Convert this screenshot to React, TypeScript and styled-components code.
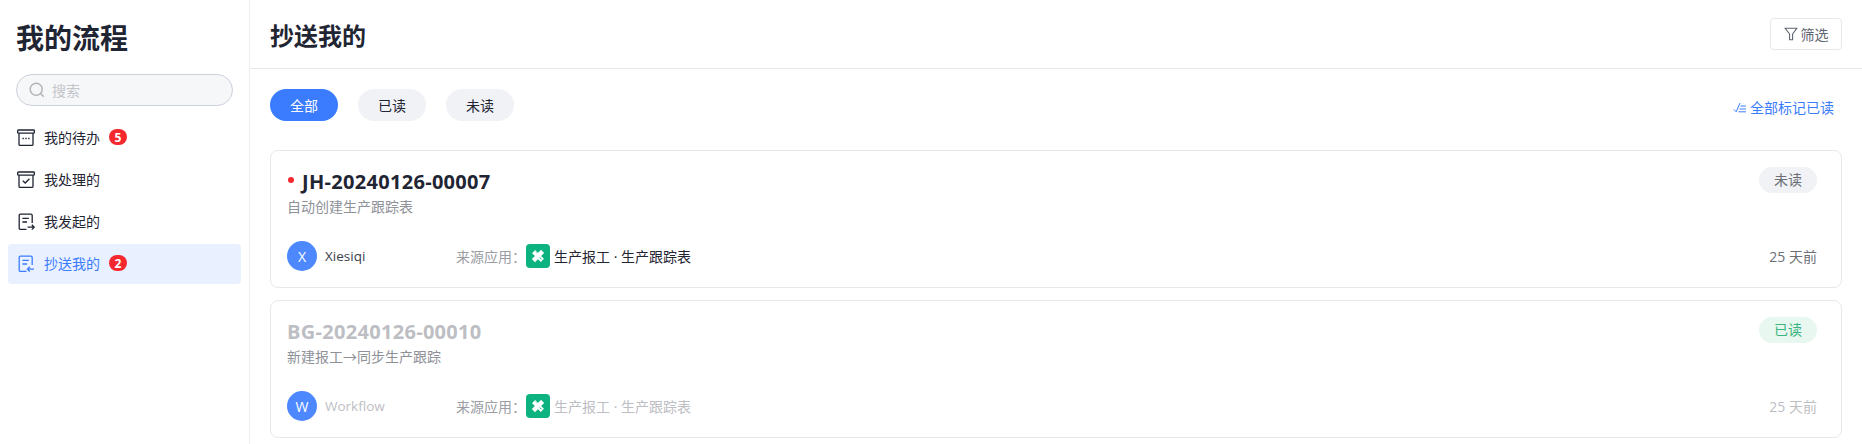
import styled, { createGlobalStyle } from 'styled-components';

const GlobalStyle = createGlobalStyle`
    html, body {
        margin: 0;
        height: 100%;
        background: #fff;
        font-family: 'Open Sans', 'Noto Sans CJK SC', sans-serif;
        overflow: hidden;
    }
    * { box-sizing: border-box; }
`;

const ArchiveIcon = ({ check }: { check?: boolean }) => (
    <svg width="18" height="18" viewBox="0 0 18 18" fill="none" stroke="currentColor" strokeWidth="1.3">
        <rect x="0.7" y="1" width="16.6" height="3.2" rx="0.6" />
        <path d="M2 4.2V15.4A1 1 0 0 0 3 16.4H15A1 1 0 0 0 16 15.4V4.2" />
        {check ? (
            <path d="M5.8 9.8L8.2 12L12.4 7.8" />
        ) : (
            <path d="M5.4 9.6H6.8M8.3 9.6H9.7M11.2 9.6H12.6" strokeWidth="1.5" />
        )}
    </svg>
);

const DocIcon = ({ incoming }: { incoming?: boolean }) => (
    <svg width="18" height="18" viewBox="0 0 18 18" fill="none" stroke="currentColor" strokeWidth="1.3">
        <path d="M9.5 16.4H3.4A1.2 1.2 0 0 1 2.2 15.2V2.4A1.2 1.2 0 0 1 3.4 1.2H14A1.2 1.2 0 0 1 15.2 2.4V10" />
        <path d="M5.4 5.4H11.8M5.4 9H10" />
        {incoming ? (
            <path d="M17 14.2H10.6M12.8 11.8L10.4 14.2L12.8 16.6" />
        ) : (
            <path d="M10.6 14.2H17M14.8 11.8L17.2 14.2L14.8 16.6" />
        )}
    </svg>
);

const AppLogo = () => (
    <svg width="16" height="16" viewBox="0 0 16 16" fill="none">
        <path d="M3.6 3.6L12.4 12.4" stroke="#fff" strokeWidth="4.4" />
        <path d="M12.6 3.4L3.4 12.6" stroke="#fff" strokeWidth="4.4" />
        <path d="M9.6 9.4L11.6 11.4M6 3.6L7 4.6" stroke="#0cb27f" strokeWidth="0.9" />
    </svg>
);

const items = [
    { label: '我的待办', badge: '5', icon: <ArchiveIcon /> },
    { label: '我处理的', icon: <ArchiveIcon check /> },
    { label: '我发起的', icon: <DocIcon /> },
    { label: '抄送我的', badge: '2', icon: <DocIcon incoming />, active: true },
];

const cards = [
    {
        code: 'JH-20240126-00007',
        desc: '自动创建生产跟踪表',
        user: 'Xiesiqi',
        initial: 'X',
        read: false,
    },
    {
        code: 'BG-20240126-00010',
        desc: '新建报工→同步生产跟踪',
        user: 'Workflow',
        initial: 'W',
        read: true,
    },
];

const App = () => (
    <Page>
        <GlobalStyle />
        <Sidebar>
            <SideTitle>我的流程</SideTitle>
            <SearchBox>
                <svg width="16" height="16" viewBox="0 0 16 16" fill="none" stroke="#b4b6bb" strokeWidth="1.5">
                    <circle cx="7.2" cy="7.2" r="6" />
                    <path d="M11.6 11.6L14.8 14.8" />
                </svg>
                <span>搜索</span>
            </SearchBox>
            <NavList>
                {items.map((item) => (
                    <NavItem key={item.label} $active={item.active}>
                        <NavIcon>{item.icon}</NavIcon>
                        <NavLabel>{item.label}</NavLabel>
                        {item.badge && <Badge>{item.badge}</Badge>}
                    </NavItem>
                ))}
            </NavList>
        </Sidebar>

        <Main>
            <Header>
                <Title>抄送我的</Title>
                <FilterButton>
                    <svg width="14" height="14" viewBox="0 0 14 14" fill="none" stroke="#5f6570" strokeWidth="1.1">
                        <path d="M1 1.2H13L8.6 7V12.8H5.6V7Z" strokeLinejoin="round" />
                    </svg>
                    筛选
                </FilterButton>
            </Header>

            <Content>
                <Toolbar>
                    <Tabs>
                        <Tab $active>全部</Tab>
                        <Tab>已读</Tab>
                        <Tab>未读</Tab>
                    </Tabs>
                    <MarkAll>
                        <svg width="14" height="14" viewBox="0 0 14 14" fill="none" stroke="#3b7cff" strokeWidth="1">
                            <path d="M1 9.5L3.2 11.8L7 3M7.5 6H13M6.5 9H13M5.5 11.8H13" />
                        </svg>
                        全部标记已读
                    </MarkAll>
                </Toolbar>

                {cards.map((card) => (
                    <Card key={card.code}>
                        <CardTop>
                            <div>
                                <Code $read={card.read}>
                                    {!card.read && <UnreadDot />}
                                    {card.code}
                                </Code>
                                <Desc>{card.desc}</Desc>
                            </div>
                            <Status $read={card.read}>{card.read ? '已读' : '未读'}</Status>
                        </CardTop>
                        <CardBottom>
                            <UserCell>
                                <Avatar>{card.initial}</Avatar>
                                <UserName $read={card.read}>{card.user}</UserName>
                            </UserCell>
                            <SourceLabel>来源应用：</SourceLabel>
                            <AppBadge>
                                <AppLogo />
                            </AppBadge>
                            <SourceName $read={card.read}>生产报工 · 生产跟踪表</SourceName>
                            <Time $read={card.read}>25 天前</Time>
                        </CardBottom>
                    </Card>
                ))}
            </Content>
        </Main>
    </Page>
);

export default App;

const Page = styled.div`
    display: flex;
    width: 1862px;
    height: 444px;
    overflow: hidden;
    color: #1f2533;
`;

const Sidebar = styled.aside`
    width: 250px;
    flex-shrink: 0;
    padding: 0 8px;
    border-right: 1px solid #eceef2;
`;

const SideTitle = styled.h1`
    margin: 21px 0 0 8px;
    font-size: 28px;
    line-height: 34px;
    font-weight: 700;
    color: #1f2533;
`;

const SearchBox = styled.div`
    display: flex;
    align-items: center;
    gap: 7px;
    width: 217px;
    height: 32px;
    margin: 19px 0 0 8px;
    padding: 0 12px;
    background: #f6f7f9;
    border: 1px solid #cdd1dc;
    border-radius: 16px;
    font-size: 14px;
    color: #c3c5ca;
`;

const NavList = styled.nav`
    display: flex;
    flex-direction: column;
    gap: 2px;
    margin-top: 12px;
`;

const NavItem = styled.div<{ $active?: boolean }>`
    display: flex;
    align-items: center;
    width: 233px;
    height: 40px;
    padding: 0 10px;
    border-radius: 4px;
    font-size: 14px;
    background: ${({ $active }) => ($active ? '#e9f0ff' : 'transparent')};
    color: ${({ $active }) => ($active ? '#3b7cff' : '#1f2533')};
`;

const NavIcon = styled.span`
    display: flex;
    width: 26px;
    flex-shrink: 0;
    margin-left: -1px;
    margin-right: 1px;
`;

const NavLabel = styled.span`
    margin-top: -2px;
`;

const Badge = styled.span`
    display: flex;
    align-items: center;
    justify-content: center;
    width: 18px;
    height: 16px;
    margin: -2px 0 0 9px;
    border-radius: 8px;
    background: #f5282d;
    color: #fff;
    font-size: 12px;
    font-weight: 700;
`;

const Main = styled.main`
    flex: 1;
    min-width: 0;
`;

const Header = styled.header`
    display: flex;
    align-items: center;
    justify-content: space-between;
    height: 69px;
    padding: 0 20px;
    border-bottom: 1px solid #e7e8ec;
`;

const Title = styled.h2`
    margin: 0;
    font-size: 24px;
    font-weight: 700;
    color: #1f2533;
`;

const FilterButton = styled.button`
    display: flex;
    align-items: center;
    justify-content: center;
    gap: 3px;
    width: 72px;
    height: 32px;
    padding: 0;
    background: #fff;
    border: 1px solid #e7e8ec;
    border-radius: 4px;
    font-family: inherit;
    font-size: 14px;
    color: #5f6570;
`;

const Content = styled.div`
    padding: 20px 20px 0;
`;

const Toolbar = styled.div`
    display: flex;
    align-items: center;
    justify-content: space-between;
    height: 32px;
    margin-bottom: 29px;
`;

const Tabs = styled.div`
    display: flex;
    gap: 20px;
`;

const Tab = styled.div<{ $active?: boolean }>`
    display: flex;
    align-items: center;
    justify-content: center;
    width: 68px;
    height: 32px;
    border-radius: 16px;
    font-size: 14px;
    background: ${({ $active }) => ($active ? '#3b7cff' : '#f0f2f6')};
    color: ${({ $active }) => ($active ? '#fff' : '#1f2533')};
`;

const MarkAll = styled.div`
    display: flex;
    align-items: center;
    gap: 3px;
    margin: 3px 8px 0 0;
    font-size: 14px;
    color: #3b7cff;
`;

const Card = styled.article`
    display: flex;
    flex-direction: column;
    justify-content: space-between;
    height: 138px;
    margin-bottom: 12px;
    padding: 18px 24px 16px 16px;
    border: 1px solid #e7e8ec;
    border-radius: 8px;
`;

const CardTop = styled.div`
    display: flex;
    justify-content: space-between;
    align-items: flex-start;
`;

const Code = styled.div<{ $read?: boolean }>`
    display: flex;
    align-items: center;
    font-size: 20px;
    line-height: 26px;
    font-weight: 700;
    letter-spacing: 0.3px;
    color: ${({ $read }) => ($read ? '#bdbec3' : '#1f2533')};
`;

const UnreadDot = styled.span`
    width: 6px;
    height: 6px;
    margin: -4px 8px 0 1px;
    border-radius: 50%;
    background: #f5282d;
`;

const Desc = styled.div`
    margin-top: 3px;
    font-size: 14px;
    line-height: 18px;
    color: #8e9198;
`;

const Status = styled.span<{ $read?: boolean }>`
    width: 58px;
    height: 26px;
    margin-top: -2px;
    border-radius: 13px;
    text-align: center;
    font-size: 14px;
    line-height: 26px;
    background: ${({ $read }) => ($read ? '#e8f7f0' : '#f0f2f6')};
    color: ${({ $read }) => ($read ? '#3bb57f' : '#6b6e75')};
`;

const CardBottom = styled.div`
    display: flex;
    align-items: center;
    height: 30px;
    font-size: 14px;
`;

const UserCell = styled.div`
    display: flex;
    align-items: center;
    gap: 8px;
    width: 169px;
`;

const Avatar = styled.span`
    display: flex;
    align-items: center;
    justify-content: center;
    width: 30px;
    height: 30px;
    border-radius: 50%;
    background: #4d88ff;
    color: #fff;
    font-size: 14px;
`;

const UserName = styled.span<{ $read?: boolean }>`
    font-size: 13.5px;
    color: ${({ $read }) => ($read ? '#bdbec3' : '#3a3f4a')};
`;

const SourceLabel = styled.span`
    color: #9b9da3;
`;

const AppBadge = styled.span`
    display: flex;
    align-items: center;
    justify-content: center;
    width: 24px;
    height: 24px;
    margin-right: 4px;
    border-radius: 4px;
    background: #0cb27f;
`;

const SourceName = styled.span<{ $read?: boolean }>`
    color: ${({ $read }) => ($read ? '#bdbec3' : '#1f2533')};
`;

const Time = styled.span<{ $read?: boolean }>`
    margin-left: auto;
    color: ${({ $read }) => ($read ? '#bdbec3' : '#6b6e75')};
`;
